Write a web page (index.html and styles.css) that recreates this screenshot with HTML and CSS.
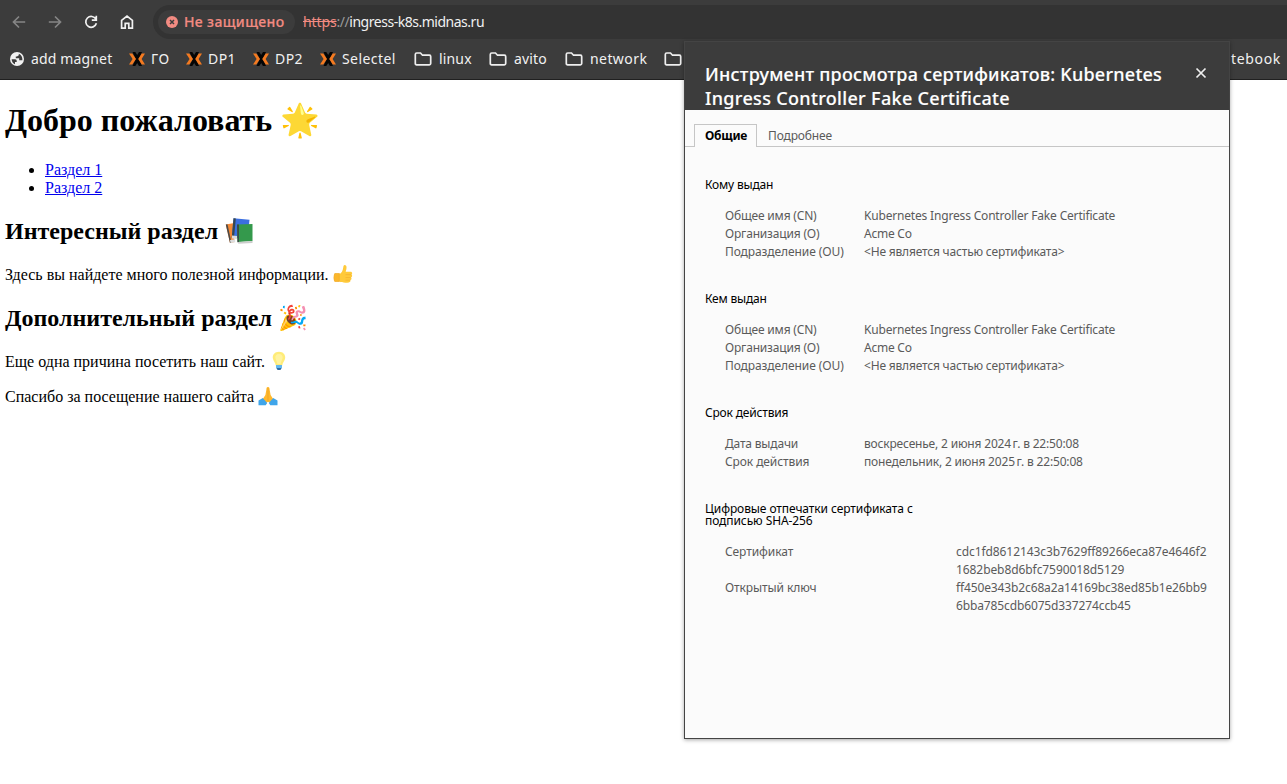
FILE: index.html
```html
<!DOCTYPE html>
<html lang="ru">
<head>
<meta charset="utf-8">
<title>ingress-k8s.midnas.ru</title>
<link rel="stylesheet" href="styles.css">
</head>
<body>
<svg width="0" height="0" class="defs">
  <symbol id="folder" viewBox="0 0 18 16"><path d="M1.300 3.400Q1.300 2 2.700 2H6.500l2 2.200h6.900q1.300 0 1.300 1.300v7q0 1.300-1.300 1.300H2.600q-1.300 0-1.300-1.300Z" fill="none" stroke="#eee" stroke-width="1.700"/></symbol>
  <symbol id="xmark" viewBox="0 0 16 14"><path d="M3.500 0H6.300L8.200 3 10 0h3L11 4.500 9.800 7 11 9.500 13 14h-3L8.200 11 6.300 14H3.500L5.600 9.500 6.600 7 5.600 4.500z" fill="#050505"/><path d="M0 1.500h3.300L7 7l-3.700 5.500H0L3.600 7zM16 1.500h-3.300L9.200 7l3.500 5.500H16L12.600 7z" fill="#f47a20"/></symbol>
</svg>
<header class="chrome">
  <div class="toolbar">
    <svg class="nav dim" viewBox="0 0 16 16"><path d="M14.200 8H2.600M8 2.500 2.500 8 8 13.500"/></svg>
    <svg class="nav dim" viewBox="0 0 16 16"><path d="M1.800 8h11.600M8 2.500 13.500 8 8 13.500"/></svg>
    <svg class="nav" viewBox="0 0 16 16"><path d="M12.900 5.200A5.400 5.400 0 1 0 13.400 9.300M13.300 1.800v4.300H8.800"/></svg>
    <svg class="nav" viewBox="0 0 16 16"><path d="M2.600 6.300 8 2l5.400 4.300v7.900h-3.600V9.300H6.200v4.900H2.600z"/></svg>
    <div class="omnibox">
      <div class="chip">
        <svg class="warn" viewBox="0 0 12 12"><circle cx="6" cy="6" r="6" fill="#f28b82"/><path d="M4 4l4 4M8 4l-4 4" stroke="#3c3c3c" stroke-width="1.500"/></svg>
        <span>Не защищено</span>
      </div>
      <div class="url"><s>https</s><i>://</i>ingress-k8s.midnas.ru</div>
    </div>
  </div>
  <nav class="bookmarks">
    <a><svg class="globe" viewBox="0 0 14 14"><circle cx="7" cy="7" r="7" fill="#f1f1f1"/><path d="M1.600 7.200h3.600q1.500 0 1.500 1.500v1.200H5v2.300Q2 11 1.600 7.200zM8.800 1.800v1.400L7 4.600H5.800v1.600h3.400v2h3.200q.2-4.500-3.600-6.400z" fill="#3c3c3c"/></svg><span>add magnet</span></a>
    <a><svg class="xm"><use href="#xmark"/></svg><span class="wide">ГО</span></a>
    <a><svg class="xm"><use href="#xmark"/></svg><span class="mid">DP1</span></a>
    <a><svg class="xm"><use href="#xmark"/></svg><span class="mid">DP2</span></a>
    <a><svg class="xm"><use href="#xmark"/></svg><span class="mid">Selectel</span></a>
    <a class="dir"><svg class="fold"><use href="#folder"/></svg><span>linux</span></a>
    <a class="dir"><svg class="fold"><use href="#folder"/></svg><span>avito</span></a>
    <a class="dir"><svg class="fold"><use href="#folder"/></svg><span class="mid">network</span></a>
    <a class="dir"><svg class="fold"><use href="#folder"/></svg></a>
    <a class="last"><span class="wide">notebook</span></a>
  </nav>
</header>
<main class="page">
  <h1>Добро пожаловать <span>🌟</span></h1>
  <ul>
    <li><a href="#s1">Раздел 1</a></li>
    <li><a href="#s2">Раздел 2</a></li>
  </ul>
  <h2 id="s1">Интересный раздел <svg class="books" viewBox="0 0 28 28"><path d="M.8 7.500 8 6.300 9.500 25l-4.500 1z" fill="#f58a35"/><path d="M.8 7.500l1.700-.3 4 18.500-1.500.3z" fill="#4a4a4a"/><path d="M5 23l5-.8.3 3-4.700.8z" fill="#ddd"/><path d="M8.500 1.300 24.500 2.800 22.500 22 6.800 20.500z" fill="#3b6fe0"/><path d="M8.500 1.300l2.300.3L9 21l-2.200-.5z" fill="#37474f"/><path d="M7 18.500l5 .4v3l-5-.5z" fill="#ddd"/><path d="M12 7.500 27.500 7v17l-15 1z" fill="#34994c"/><path d="M12 7.500h2v17.800h-1.500z" fill="#3b4a45"/><path d="M12.500 25.300l15-1.300v1.900l-14 .9z" fill="#ccc"/></svg></h2>
  <p>Здесь вы найдете много полезной информации. <svg class="emo" viewBox="0 0 20 20"><path d="M7.500 9.500C10 7.500 10 4 10.500 2c.5-1.800 2.800-1.300 3 .8.200 1.900-.4 3.500-.8 4.900h4.800c2 0 2.200 2.400.8 2.900 1.400.7 1 2.600-.3 2.900 1 .8.600 2.300-.7 2.600.6 1-.1 2.200-1.500 2.300-3 .4-7.200.4-9.600-.9H1.800C.6 16 .6 11.500 1.800 9.500z" fill="#ffca3a"/><path d="M1.800 9.500h4.500v8H1.800C.6 16 .6 11.500 1.800 9.500zM12.500 10.700h5.800M12.500 13.600h5.300M12.500 16.200h4.600" fill="#fbb72c" stroke="#eda42b" stroke-width=".5"/></svg></p>
  <h2 id="s2">Дополнительный раздел <span>🎉</span></h2>
  <p>Еще одна причина посетить наш сайт. <svg class="emo" viewBox="0 0 20 20"><path d="M10 .8c4.200 0 6.500 3 6.200 6.200-.3 3-2.700 4.300-3 7.500H6.800C6.500 11.300 4.100 10 3.800 7 3.500 3.800 5.800.8 10 .8z" fill="#ffec78"/><path d="M10 3c2.600 0 4 2 3.600 4-.3 1.600-1.700 3.500-2 6H8.400c-.3-2.500-1.700-4.400-2-6C6 5 7.400 3 10 3z" fill="#fff3a0"/><path d="M7 14h6v3.300H7z" fill="#63b8ee"/><path d="M7.500 17h5l-1 2h-3z" fill="#2f6da4"/></svg></p>
  <p>Спасибо за посещение нашего сайта <svg class="emo" viewBox="0 0 20 20"><path d="M9.900 1C8.700.8 8.500 2 8.300 4L7.400 9 4.500 13.500 7 17.500l3-1.700 3 1.700 2.500-4L12.600 9l-.9-5c-.2-2-.4-3.200-1.800-3z" fill="#ffb92e"/><path d="M10 2v13.500" stroke="#e59b20" stroke-width=".6"/><path d="M.5 14.500 4.800 12l4.400 5-1.500 2.300H.5zM19.500 14.500 15.200 12l-4.400 5 1.500 2.300h7.200z" fill="#3fa5ea"/></svg></p>
</main>
<section class="dialog">
  <div class="title">
    <div><span class="t1">Инструмент просмотра сертификатов: Kubernetes</span><br><span class="t2">Ingress Controller Fake Certificate</span></div>
    <svg viewBox="0 0 12 12"><path d="M1.500 1.500l9 9M10.500 1.500l-9 9" stroke="#eee" stroke-width="1.700"/></svg>
  </div>
  <div class="tabs"><b>Общие</b><span>Подробнее</span></div>
  <div class="cert">
    <h3>Кому выдан</h3>
    <dl>
      <dt>Общее имя (CN)</dt><dd>Kubernetes Ingress Controller Fake Certificate</dd>
      <dt>Организация (O)</dt><dd class="tight">Acme Co</dd>
      <dt class="ou">Подразделение (OU)</dt><dd>&lt;Не является частью сертификата&gt;</dd>
    </dl>
    <h3>Кем выдан</h3>
    <dl>
      <dt>Общее имя (CN)</dt><dd>Kubernetes Ingress Controller Fake Certificate</dd>
      <dt>Организация (O)</dt><dd class="tight">Acme Co</dd>
      <dt class="ou">Подразделение (OU)</dt><dd>&lt;Не является частью сертификата&gt;</dd>
    </dl>
    <h3>Срок действия</h3>
    <dl>
      <dt>Дата выдачи</dt><dd>воскресенье, 2 июня 2024<span class="nar"> </span>г. в 22:50:08</dd>
      <dt class="ou">Срок действия</dt><dd>понедельник, 2 июня 2025<span class="nar"> </span>г. в 22:50:08</dd>
    </dl>
    <h3 class="ou">Цифровые отпечатки сертификата с<br>подписью SHA-256</h3>
    <dl class="hashes">
      <dt class="ou">Сертификат</dt><dd>cdc1fd8612143c3b7629ff89266eca87e4646f2<br>1682beb8d6bfc7590018d5129</dd>
      <dt class="ou">Открытый ключ</dt><dd class="key">ff450e343b2c68a2a14169bc38ed85b1e26bb9<br>6bba785cdb6075d337274ccb45</dd>
    </dl>
  </div>
</section>
</body>
</html>
```
FILE: styles.css
```css
* { box-sizing: border-box; }
body {
  margin: 0;
  height: 784px;
  overflow: hidden;
  background: #fff;
  color: #000;
  font: 16px/18px "Liberation Serif", "Noto Color Emoji", serif;
}
.defs { position: absolute; }

/* Browser chrome */
.chrome {
  height: 80px;
  padding-top: 5px;
  background: #3c3c3c;
  border-bottom: 1px solid #202020;
  color: #f1f1f1;
  font: 14px/20px "Noto Sans", sans-serif;
}
.toolbar { display: flex; align-items: center; height: 34px; padding-left: 11px; }
.nav {
  width: 16px;
  height: 16px;
  margin-right: 20px;
  flex: none;
  fill: none;
  stroke: #f1f1f1;
  stroke-width: 1.7;
}
.dim { stroke: #858585; }
.omnibox {
  display: flex;
  align-items: center;
  flex: 1;
  height: 34px;
  margin-left: -2px;
  padding-left: 5px;
  background: #333;
  border-radius: 17px 0 0 17px;
}
.chip {
  display: flex;
  align-items: center;
  gap: 6px;
  width: 137px;
  height: 24px;
  padding-left: 8px;
  border-radius: 12px;
  background: #3c3c3c;
  color: #f28b82;
  font-weight: 500;
  letter-spacing: 0.36px;
  white-space: nowrap;
  -webkit-text-stroke: 0.2px #f28b82;
}
.warn { width: 12px; height: 12px; flex: none; }
.url { margin-left: 8px; letter-spacing: -0.48px; white-space: nowrap; }
.url s { color: #f28b82; letter-spacing: -0.1px; }
.url i { color: #9a9a9a; font-style: normal; }

.bookmarks {
  display: grid;
  grid-template-columns: 119px 57px 67px 67px 94px 75px 76px 99px 20px 1fr;
  height: 40px;
  padding: 0 6px 0 10px;
}
.bookmarks a { display: flex; align-items: center; gap: 6px; white-space: nowrap; letter-spacing: 0.15px; }
.bookmarks .dir { gap: 7px; }
.bookmarks .last { justify-content: flex-end; }
.bookmarks .mid { letter-spacing: 0.42px; }
.bookmarks .wide { letter-spacing: 0.67px; }
.globe { width: 14px; height: 14px; margin-right: 1px; }
.xm { width: 16px; height: 14px; }
.fold { width: 18px; height: 16px; }

/* Page content */
.page { padding: 22px 5px 0; }
h1, h2, p, ul { margin: 0; white-space: nowrap; }
h1 { font-size: 32px; line-height: 37px; height: 37px; }
ul { margin-top: 22px; padding-left: 40px; }
li a { color: #0000ee; }
h2 { margin-top: 20px; height: 28px; font-size: 24px; line-height: 28px; }
p { height: 18px; margin-top: 21px; }
p + p { margin-top: 17px; }
.books { width: 28px; height: 28px; margin-left: 1px; vertical-align: -6px; }
.emo { width: 20px; height: 20px; margin: -6px 0 -3px; vertical-align: -1px; }

/* Certificate viewer overlays the chrome and the page */
.dialog {
  position: absolute;
  left: 684px;
  top: 41px;
  width: 546px;
  height: 698px;
  border: 1px solid #444;
  background: #fbfbfb;
  box-shadow: 0 1px 4px rgba(0, 0, 0, 0.35);
  font: 12px/18px "Noto Sans", sans-serif;
  color: #5a5a5a;
}
.title {
  display: flex;
  justify-content: space-between;
  height: 68px;
  padding: 20px 22px 0 20px;
  background: #3c3c3c;
  color: #fff;
  font-size: 18px;
  font-weight: 500;
  line-height: 24px;
  white-space: nowrap;
  -webkit-text-stroke: 0.15px #fff;
}
.title svg { width: 12px; height: 12px; margin-top: 5px; }
.t1 { letter-spacing: 0.24px; }
.t2 { letter-spacing: 0.33px; }
.tabs {
  display: flex;
  align-items: flex-end;
  height: 37px;
  padding-left: 9px;
  border-bottom: 1px solid #c6c6c6;
}
.tabs b {
  width: 63px;
  height: 23px;
  margin-bottom: -1px;
  padding: 2px 0 0 10px;
  border: 1px solid #c6c6c6;
  border-bottom: 0;
  background: #fbfbfb;
  color: #000;
  letter-spacing: -0.27px;
}
.tabs span { height: 19px; margin-left: 11px; letter-spacing: -0.14px; }
.cert { padding: 32px 20px 0; letter-spacing: -0.18px; white-space: nowrap; }
h3 { margin: 0 0 16px; font-size: 12px; font-weight: 400; line-height: 12px; color: #000; }
dl {
  display: grid;
  grid-template-columns: 139px 1fr;
  margin: 0 0 32px;
  padding-left: 20px;
}
.hashes { grid-template-columns: 231px 1fr; letter-spacing: -0.08px; }
dt, dd { margin: 0; }
.ou { letter-spacing: -0.09px; }
.key { letter-spacing: -0.13px; }
.tight { letter-spacing: -0.24px; }
.nar { letter-spacing: -1.5px; }
```
